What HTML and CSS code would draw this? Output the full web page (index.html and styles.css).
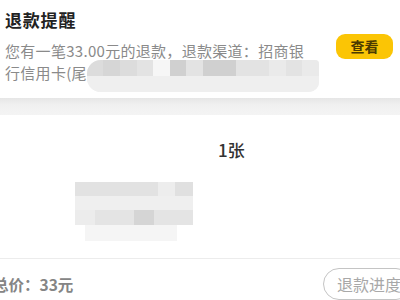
FILE: index.html
```html
<!DOCTYPE html>
<html lang="zh-CN">
<head>
<meta charset="utf-8">
<link rel="stylesheet" href="styles.css">
</head>
<body>
<div class="page">
  <section class="notice">
    <div class="notice-main">
      <div class="title">退款提醒</div>
      <div class="desc">
        <div class="line">您有一笔33.00元的退款，退款渠道：招商银</div>
        <div class="line">行信用卡(尾<span class="mosaic mosaic-a"><i class="c1"></i><i class="c2"></i><i class="c1"></i><i class="c3"></i><i class="c4"></i><i class="c5"></i><i class="c3"></i><i class="c5 w2"></i><i class="c3 w2"></i><i class="c6"></i><i class="c3"></i><i class="c6"></i></span></div>
      </div>
    </div>
    <button class="btn-view">查看</button>
  </section>
  <div class="sep"></div>
  <section class="goods">
    <div class="qty">1张</div>
    <div class="mosaic-b">
      <div class="row r1"></div>
      <div class="row r2"></div>
      <div class="row r3"><i></i><i></i><i></i><i class="dk"></i><i></i><i></i></div>
      <div class="row r4"></div>
    </div>
  </section>
  <footer class="footer">
    <div class="total">总价：33元</div>
    <button class="btn-progress">退款进度</button>
  </footer>
</div>
</body>
</html>
```
FILE: styles.css
```css
html, body {
  margin: 0;
  padding: 0;
  background: #ffffff;
}
body {
  width: 400px;
  height: 300px;
  overflow: hidden;
  font-family: "Noto Sans CJK SC", "Noto Sans", sans-serif;
}
.page {
  width: 400px;
}
.notice {
  display: flex;
  align-items: flex-start;
  height: 98px;
  padding-left: 5px;
}
.notice-main {
  flex: 1;
}
.title {
  margin-top: 9px;
  font-size: 17px;
  line-height: 22px;
  letter-spacing: 0.8px;
  font-weight: 700;
  color: #222;
}
.desc {
  margin-top: 9px;
  font-size: 15px;
  line-height: 22px;
  color: #8a8a8a;
  letter-spacing: 0.3px;
}
.line {
  white-space: nowrap;
}
.mosaic {
  display: inline-flex;
  vertical-align: top;
  margin-top: -2px;
  margin-bottom: -10px;
  height: 32px;
  width: 232px;
  border-radius: 14px 4px 10px 14px;
  overflow: hidden;
  background: #f0f0f0;
}
.mosaic i {
  display: block;
  flex: 1;
  height: 16px;
  background: #ddd;
  box-shadow: 0 16px 0 #efefef;
}
.mosaic i.w2 { flex: 2; }
.mosaic i.c1 { background: #dcdcdc; }
.mosaic i.c2 { background: #d6d6d6; }
.mosaic i.c3 { background: #e3e3e3; }
.mosaic i.c4 { background: #f6f6f6; }
.mosaic i.c5 { background: #d0d0d0; }
.mosaic i.c6 { background: #eaeaea; }
.btn-view {
  margin: 34px 7px 0 auto;
  width: 57px;
  height: 25px;
  border: none;
  border-radius: 9px;
  background: #fbc505;
  color: #4b3b00;
  font-family: inherit;
  font-size: 14px;
  font-weight: 700;
  padding: 0;
  line-height: 25px;
}
.sep {
  height: 17px;
  background: linear-gradient(#e6e6e6, #f0f0f0 40%, #f4f4f4);
}
.goods {
  box-sizing: border-box;
  height: 144px;
  padding-top: 24px;
  border-bottom: 1px solid #ececec;
}
.qty {
  padding-left: 218px;
  font-size: 17px;
  line-height: 22px;
  font-weight: 500;
  color: #333;
}
.mosaic-b {
  margin: 21px 0 0 75px;
  width: 118px;
}
.mosaic-b .row {
  height: 14px;
}
.mosaic-b .r1 {
  background: linear-gradient(90deg, #e2e2e2 0 70%, #ededed 70% 85%, #e0e0e0 85%);
}
.mosaic-b .r2 {
  background: #efefef;
}
.mosaic-b .r3 {
  display: flex;
  height: 15px;
  background: #e6e6e6;
}
.mosaic-b .r3 i {
  flex: 1;
  background: #e4e4e4;
}
.mosaic-b .r3 i:first-child { background: #ececec; }
.mosaic-b .r3 i.dk { background: #d5d5d5; }
.mosaic-b .r4 {
  height: 16px;
  margin: 0 16px 0 10px;
  background: #f5f5f5;
}
.footer {
  display: flex;
  align-items: center;
  height: 50px;
}
.total {
  margin-left: -7px;
  font-size: 15.5px;
  font-weight: 700;
  color: #858585;
}
.btn-progress {
  margin-left: auto;
  margin-right: -12px;
  width: 89px;
  height: 32px;
  border: 1.5px solid #c4c4c4;
  border-radius: 16px;
  background: #fff;
  color: #a8a8a8;
  font-family: inherit;
  font-size: 16px;
  padding: 0 0 0 13px;
  text-align: left;
  white-space: nowrap;
  overflow: hidden;
}
```
